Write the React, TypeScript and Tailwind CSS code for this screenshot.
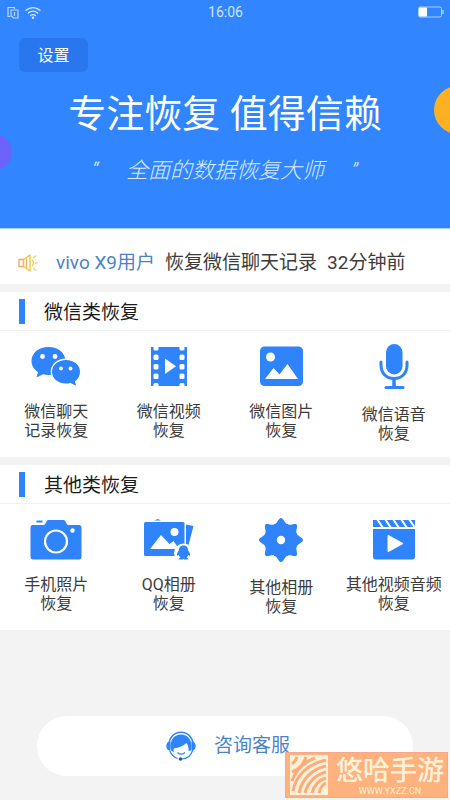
import type { ReactNode } from 'react';

const BLUE = '#2f83fb';

function ClipboardIcon() {
  return (
    <svg className="h-[13px] w-3" viewBox="0 0 12 13" fill="none" stroke="#b9d8ff" strokeWidth="1.200" aria-hidden="true">
      <path d="M3.500 10.500H1V1.500h6.500V3" />
      <path d="M4 4h7v8H6.500L4 9.500z" />
      <path d="M7.500 6v4" />
    </svg>
  );
}

function WifiIcon() {
  return (
    <svg className="h-[13px] w-4" viewBox="0 0 16 13" fill="none" stroke="#d3e8ff" strokeWidth="1.300" strokeLinecap="round" aria-hidden="true">
      <path d="M1 4.200a10.500 10.500 0 0 1 14 0" />
      <path d="M3.300 7a7 7 0 0 1 9.400 0" />
      <path d="M5.600 9.600a3.700 3.700 0 0 1 4.800 0" />
      <circle cx="8" cy="11.800" r=".6" fill="#d3e8ff" />
    </svg>
  );
}

function BatteryIcon() {
  return (
    <svg className="h-3 w-[26px]" viewBox="0 0 26 12" aria-hidden="true">
      <rect x=".5" y="1" width="23" height="10" rx="1.500" fill="none" stroke="#a9cfff" />
      <rect x="1" y="1.500" width="8" height="9" rx="1" fill="#fff" />
      <path d="M25 4v4" stroke="#a9cfff" strokeWidth="1.500" />
    </svg>
  );
}

function SpeakerIcon() {
  return (
    <svg className="h-5 w-5" viewBox="0 0 20 20" fill="none" strokeWidth="1.300" strokeLinejoin="round" strokeLinecap="round" aria-hidden="true">
      <path d="M1 6.500h4.500v7H1z" stroke="#f3a565" />
      <path d="M5.500 6.500L12 2v16l-6.500-4.500z" stroke="#f2c230" />
      <path d="M8.500 6v8" stroke="#f3a565" />
      <path d="M14.500 7.500a4 4 0 0 1 0 5M15.500 4.500l2-1.500M17.500 10H19M15.500 15.500l2 1.500" stroke="#f0cf56" />
    </svg>
  );
}

function WechatIcon() {
  return (
    <svg className="h-11 w-[52px]" viewBox="0 0 52 44" aria-hidden="true">
      <path d="M18.500 4C8.800 4 1.500 10 1.500 18c0 4.600 2.400 8.400 6.500 11l-1.500 5.500 6.500-3.200c1.800.5 3.600.7 5.500.7 9.700 0 17-6 17-14s-7.300-14-17-14z" fill={BLUE} />
      <path d="M36 15.500c-8.700 0-15.300 5.700-15.300 13.200S27.300 42 36 42c1.500 0 3-.2 4.400-.6L47 44l-1-5.500c3.500-2.400 5.500-5.800 5.500-9.800 0-7.500-6.800-13.200-15.500-13.200z" fill="#fff" />
      <path d="M36 17c-7.800 0-14 5-14 11.700S28.200 40.500 36 40.500c1.600 0 3.100-.2 4.500-.6l5.600 2.900-1.200-4.600c3.200-2.200 5.100-5.600 5.100-9.500C50 22 43.800 17 36 17z" fill={BLUE} />
      <g fill="#fff">
        <circle cx="12.500" cy="13.500" r="2.400" />
        <circle cx="25" cy="13.500" r="2.400" />
        <circle cx="31" cy="25.500" r="1.900" />
        <circle cx="40.500" cy="25.500" r="1.900" />
      </g>
    </svg>
  );
}

function FilmIcon() {
  return (
    <svg className="h-11 w-9" viewBox="0 0 36 44" aria-hidden="true">
      <path d="M0 4h36v39H0z" fill={BLUE} />
      <g fill="#fff">
        {[2, 11.500, 21, 30.500, 40].map((y) => (
          <g key={y}>
            <rect x="2.500" y={y} width="5" height="5.500" rx="1.500" />
            <rect x="28.500" y={y} width="5" height="5.500" rx="1.500" />
          </g>
        ))}
        <path d="M14 15.500v15.500l11-7.700z" />
      </g>
    </svg>
  );
}

function PictureIcon() {
  return (
    <svg className="h-11 w-[43px]" viewBox="0 0 43 44" aria-hidden="true">
      <rect y="3.500" width="43" height="39.500" rx="4.500" fill={BLUE} />
      <circle cx="10.500" cy="14" r="4.500" fill="#fff" />
      <path d="M5 36l8.500-11 6 6.500L27.500 21 38 36z" fill="#fff" />
    </svg>
  );
}

function MicIcon() {
  return (
    <svg className="h-[47px] w-[30px]" viewBox="0 0 30 47" fill="none" stroke={BLUE} aria-hidden="true">
      <rect x="7" y="1" width="16.500" height="30.500" rx="8.250" fill={BLUE} stroke="none" />
      <path d="M2 19v3c0 8 5 13.500 13 13.500S28 30 28 22v-3" strokeWidth="3" strokeLinecap="round" />
      <path d="M15 35.500v8" strokeWidth="3.500" />
      <path d="M7 44.500h17" strokeWidth="3" strokeLinecap="round" />
    </svg>
  );
}

function CameraIcon() {
  return (
    <svg className="h-11 w-[52px]" viewBox="0 0 52 44" aria-hidden="true">
      <path d="M6.500 4.500h6v2h-6z" fill={BLUE} />
      <path d="M3 9h10.500c2.500 0 2.500-5 5-5h15c2.500 0 2.500 5 5 5H49c1.500 0 2.500 1 2.500 2.500V41c0 1.500-1 2.500-2.500 2.500H3C1.500 43.500.5 42.500.5 41V11.500C.5 10 1.500 9 3 9z" fill={BLUE} />
      <circle cx="26" cy="25.500" r="11" fill="none" stroke="#fff" strokeWidth="2.200" />
      <circle cx="42.500" cy="14.500" r="2.200" fill="#fff" />
    </svg>
  );
}

function QqAlbumIcon() {
  return (
    <svg className="h-11 w-[50px]" viewBox="0 0 50 44" aria-hidden="true">
      <path d="M10 4.500l4-1.500 3 1.500zM42 8.500l7.500 1.500-5 19-2.500-1z" fill={BLUE} />
      <rect y="6" width="40.500" height="34" rx="1.500" fill={BLUE} />
      <circle cx="30.500" cy="16" r="4" fill="#fff" />
      <path d="M6 33l11-14 8.500 9 4-3 5.500 8z" fill="#fff" />
      <circle cx="39.500" cy="37" r="9.500" fill="#fff" />
      <path d="M39.500 29.500c-3 0-4.700 2.200-4.700 5-1.500 2-2 3.500-1.800 5.500l1.800-1c.3 1 .8 1.700 1.500 2.300l-1.800 2.200h4.500l.5-1 .5 1h4.500l-1.800-2.200c.7-.6 1.200-1.300 1.500-2.300l1.800 1c.2-2-.3-3.500-1.800-5.500 0-2.800-1.700-5-4.700-5z" fill={BLUE} />
    </svg>
  );
}

function FlowerIcon() {
  return (
    <svg className="h-[47px] w-11" viewBox="0 0 44 47" aria-hidden="true">
      <g fill={BLUE}>
        <circle cx="22" cy="24" r="16.500" />
        {[0, 45, 90, 135, 180, 225, 270, 315].map((angle) => (
          <path
            key={angle}
            transform={`rotate(${angle} 22 24)`}
            d="M15 8.500C18.500 7.500 19.500 2 22 2s3.500 5.500 7 6.500L22 24z"
          />
        ))}
      </g>
      <circle cx="22" cy="24" r="4.200" fill="#fff" />
    </svg>
  );
}

function ClapperIcon() {
  return (
    <svg className="h-11 w-[42px]" viewBox="0 0 42 44" aria-hidden="true">
      <path d="M0 4h42v7H0z" fill={BLUE} />
      <path d="M4 3l6 9M12 3l6 9M20 3l6 9M28 3l6 9M36 3l6 9" stroke="#fff" strokeWidth="2" />
      <path d="M0 13h42v28c0 1.500-1 2.500-2.500 2.500h-37C1 43.500 0 42.500 0 41z" fill={BLUE} />
      <path d="M15.500 20v15l13.500-7.500z" fill="#fff" stroke="#fff" strokeWidth="2" strokeLinejoin="round" />
    </svg>
  );
}

function ServiceIcon() {
  return (
    <svg className="h-[30px] w-[30px]" viewBox="0 0 30 30" aria-hidden="true">
      <path d="M3 13C3.500 6 8.500 1.200 15 1.200S26.500 6 27 13" fill="none" stroke={BLUE} strokeWidth="1.600" />
      <path d="M4.500 10.500v9C1.500 19.500.3 17.500.3 15s1.500-4.500 4.200-4.500zM25.500 10.500v9c3 0 4.200-2 4.200-4.500s-1.500-4.500-4.200-4.500z" fill={BLUE} />
      <path d="M5 19.500C3 10 7.500 3.500 15 3.500S27 10 25 19.500l-2.500.5c.5-3-.5-6-2-8-3 3.200-7.500 4.500-12.500 5.500-.5 1-.5 2 0 3.500z" fill={BLUE} />
      <path d="M26.800 19c-1.500 5-5.500 9-11.300 9" fill="none" stroke={BLUE} strokeWidth="1.200" />
      <path d="M11.500 21.500c2.200 2 5.300 2 7.500 0" fill="none" stroke={BLUE} strokeWidth="1.200" />
      <path d="M3.500 19.500c1.500 3.500 4 6.500 8 8" fill="none" stroke={BLUE} strokeWidth="1.200" />
      <circle cx="14.500" cy="28" r="1.800" fill="#31588c" />
    </svg>
  );
}

function Watermark() {
  return (
    <div className="absolute right-0.5 bottom-0.5 flex h-[46px] w-[163px] items-center gap-2 overflow-hidden border border-[#f9a78c] bg-[#ffb27d] pl-1 text-[#fff1d8]">
      <svg className="h-10 w-[38px] shrink-0" viewBox="0 0 38 40" aria-hidden="true">
        <path d="M0 0h38v40H0z" fill="#fff1d8" />
        <g fill="none" stroke="#fbab7c" strokeWidth="3">
          <path d="M2 9C5 7 6 5 7 2M2 17C9 14 14 9 16 2M2 26C6 14 15 7 25 3M3 36C6 20 18 9 36 5M9 38C12 24 22 14 36 11M15 38c3-11 10-18 21-21M22 38c2-8 7-13 14-15M29 38c1-5 3-8 7-10" />
        </g>
      </svg>
      <div className="flex flex-col items-center whitespace-nowrap">
        <span className="text-[27px] leading-8 font-medium">悠哈手游</span>
        <span className="text-[9px] leading-[9px]">WWW.YXZZ.CN</span>
      </div>
    </div>
  );
}

type Item = { icon: ReactNode; lines: [string, string] };

const wechatItems: Item[] = [
  { icon: <WechatIcon />, lines: ['微信聊天', '记录恢复'] },
  { icon: <FilmIcon />, lines: ['微信视频', '恢复'] },
  { icon: <PictureIcon />, lines: ['微信图片', '恢复'] },
  { icon: <MicIcon />, lines: ['微信语音', '恢复'] },
];

const otherItems: Item[] = [
  { icon: <CameraIcon />, lines: ['手机照片', '恢复'] },
  { icon: <QqAlbumIcon />, lines: ['QQ相册', '恢复'] },
  { icon: <FlowerIcon />, lines: ['其他相册', '恢复'] },
  { icon: <ClapperIcon />, lines: ['其他视频音频', '恢复'] },
];

function Section({ title, items }: { title: string; items: Item[] }) {
  return (
    <section className="bg-white">
      <div className="flex h-[39px] items-center gap-[19px] border-b border-[#f1f1f1] pl-[19px]">
        <span className="h-[25px] w-1.5 bg-[#2f83fb]" />
        <h2 className="pt-1 text-[19px] leading-6 text-[#1c1c1c]">{title}</h2>
      </div>
      <div className="grid grid-cols-4 pt-3 pb-3.5">
        {items.map((item) => (
          <button key={item.lines.join('')} type="button" className="flex flex-col items-center gap-[15px]">
            {item.icon}
            <span className="text-base leading-[19px] whitespace-nowrap text-[#3c3c3c]">
              {item.lines[0]}
              <br />
              {item.lines[1]}
            </span>
          </button>
        ))}
      </div>
    </section>
  );
}

export default function App() {
  return (
    <div className="relative min-h-screen overflow-hidden bg-[#f3f3f3] font-[Roboto,'Noto_Sans_CJK_SC',sans-serif]">
      <header className="relative overflow-hidden border-b border-[#a9d3ff] bg-[#3186ff] pb-[43px]">
        <div className="grid h-6 grid-cols-3 items-center pr-1.5 pl-[7px]">
          <div className="flex items-center gap-1.5">
            <ClipboardIcon />
            <WifiIcon />
          </div>
          <span className="text-center text-sm text-[#cfe4ff]">16:06</span>
          <div className="flex justify-end">
            <BatteryIcon />
          </div>
        </div>
        <button type="button" className="mt-3.5 ml-[19px] block h-[34px] w-[69px] rounded-md bg-[#2877ef] pt-0.5 text-base leading-6 text-white">
          设置
        </button>
        <h1 className="mt-[18px] text-center text-[38px] leading-[48px] whitespace-nowrap text-white">专注恢复 值得信赖</h1>
        <p className="mx-auto mt-[19px] flex h-7 w-[266px] justify-between text-[22px] leading-7 font-light whitespace-nowrap text-[#d9eaff] italic">
          <span>“</span>
          <span>全面的数据恢复大师</span>
          <span>”</span>
        </p>
        <span className="absolute top-[86px] -right-8 h-12 w-12 rounded-full bg-[#fdb022]" />
        <span className="absolute top-[134px] -left-6 h-9 w-9 rounded-full bg-[#6b63fa]" />
      </header>

      <div className="mb-2 flex h-[55px] items-center gap-2.5 bg-white pt-3 pl-[18px] text-[19px] leading-6 whitespace-nowrap text-[#3c3c3c]">
        <SpeakerIcon />
        <span className="ml-2 text-[#4a83c8]">vivo X9用户</span>
        <span>恢复微信聊天记录</span>
        <span>32分钟前</span>
      </div>

      <div className="flex flex-col gap-2">
        <Section title="微信类恢复" items={wechatItems} />
        <Section title="其他类恢复" items={otherItems} />
      </div>

      <div className="px-[37px] pt-[86px] pb-6">
        <button type="button" className="flex h-[60px] w-full items-center justify-center gap-[18px] rounded-full bg-white pl-1.5 text-[19px] text-[#4a83c8]">
          <ServiceIcon />
          咨询客服
        </button>
      </div>

      <Watermark />
    </div>
  );
}
